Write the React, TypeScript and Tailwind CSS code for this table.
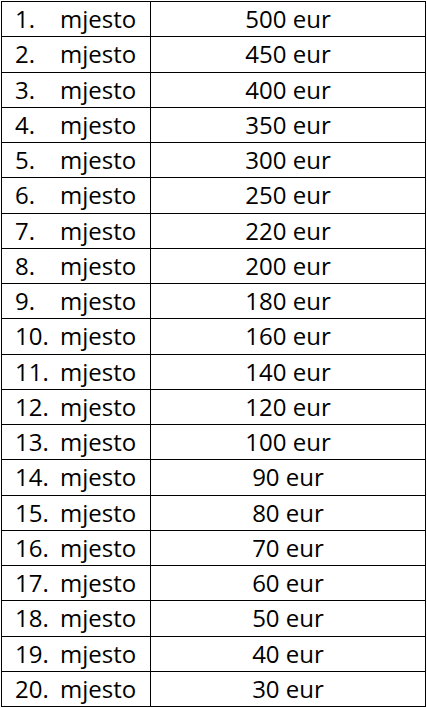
import React from "react";

const amounts = [500, 450, 400, 350, 300, 250, 220, 200, 180, 160, 140, 120, 100, 90, 80, 70, 60, 50, 40, 30];

export default function App() {
  return (
    <div className="w-[427px] h-[708px] bg-white pl-px pt-px" style={{ fontFamily: '"Open Sans", "Noto Sans", sans-serif' }}>
      <div className="w-[425px] h-[706px] bg-black p-px grid grid-cols-[148px_1fr] grid-rows-[repeat(20,1fr)] gap-px text-black text-[24px]">
        {amounts.map((a, i) => (
          <React.Fragment key={i}>
            <div className="bg-white flex items-center pl-[13px] leading-[34px] whitespace-nowrap">
              <span className="w-[45px] inline-block">{i + 1}.</span>
              <span>mjesto</span>
            </div>
            <div className="bg-white flex items-center justify-center leading-[34px] whitespace-nowrap">
              {a} eur
            </div>
          </React.Fragment>
        ))}
      </div>
    </div>
  );
}
